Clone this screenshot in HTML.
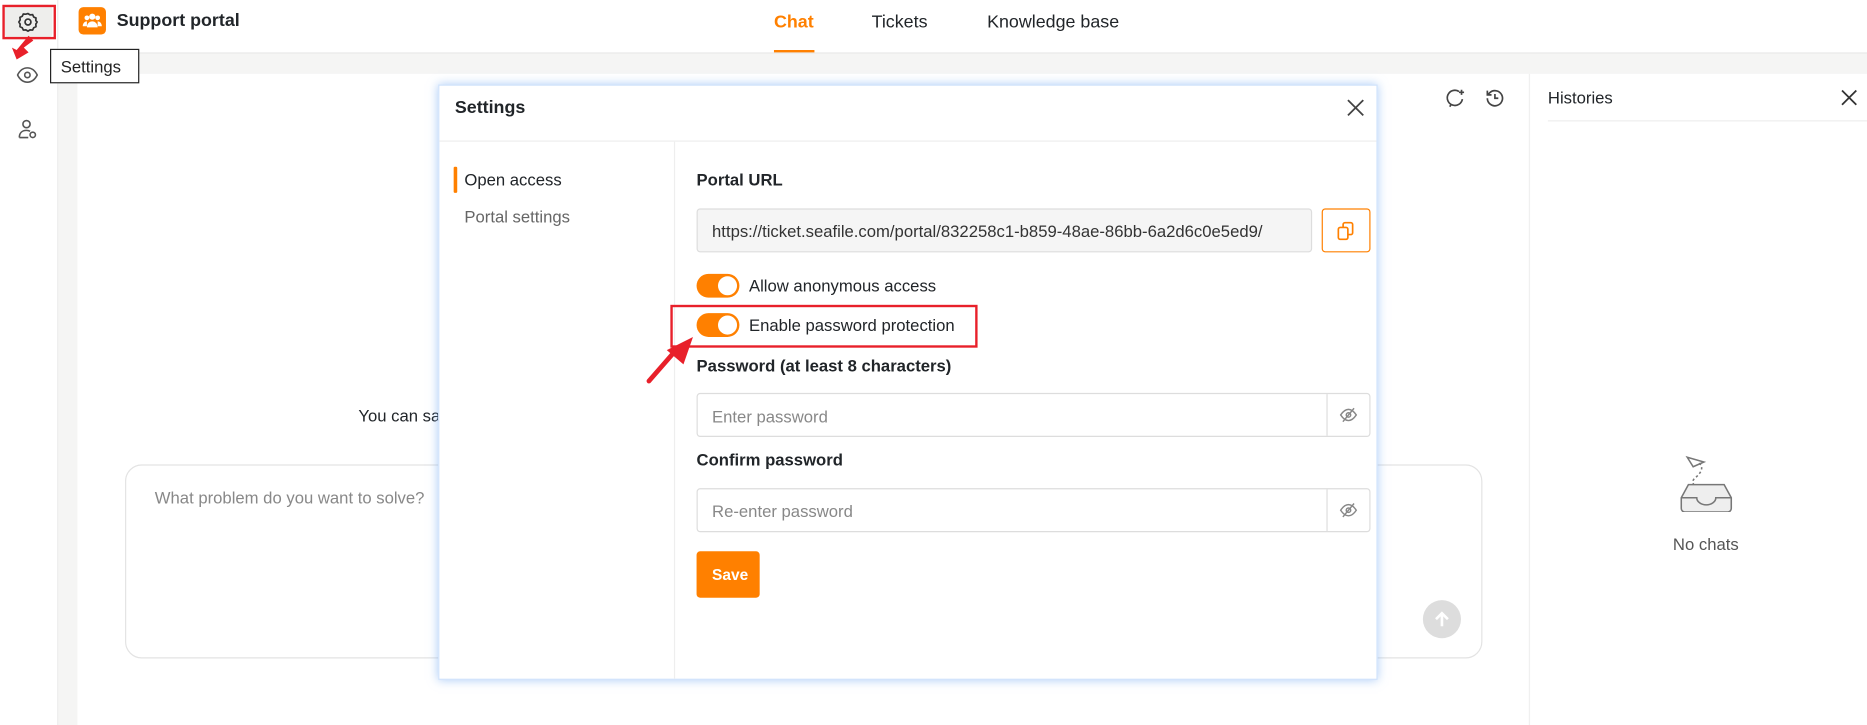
<!DOCTYPE html>
<html><head><meta charset="utf-8"><style>
*{box-sizing:border-box;margin:0;padding:0}
html,body{width:1867px;height:725px;overflow:hidden;background:#fff;font-family:"Liberation Sans",sans-serif;color:#212529}
#w{position:absolute;left:0;top:0;width:1568px;height:609px;transform:scale(1.1907);transform-origin:0 0;background:#f5f5f4}
.a{position:absolute}
.t{position:absolute;white-space:nowrap;font-size:14px}
</style></head><body><div id="w">
<div class="a" style="left:0;top:0;width:1568px;height:45px;background:#fff;border-bottom:1px solid #e8e8e8"></div>
<div class="a" style="left:0;top:0;width:49px;height:609px;background:#fff;border-right:1px solid #ececec"></div>
<div class="a" style="left:4px;top:4px;width:40px;height:28px;background:#eeeeec;border-radius:4px"></div>
<svg class="a" style="left:15px;top:10px" width="17" height="17" viewBox="0 0 24 24" fill="none" stroke="#333" stroke-width="2"><path d="M12 2l2.5 1.5 3-.2 1.3 2.7 2.7 1.3-.2 3L22.8 12l-1.5 2.5.2 3-2.7 1.3-1.3 2.7-3-.2L12 22.8l-2.5-1.5-3 .2-1.3-2.7-2.7-1.3.2-3L1.2 12l1.5-2.5-.2-3 2.7-1.3L6.5 2.5l3 .2z"/><circle cx="12" cy="12" r="3.5"/></svg>
<div class="a" style="left:2px;top:4px;width:45px;height:29px;border:2px solid #e8202a"></div>
<svg class="a" style="left:6px;top:28px" width="26" height="26" viewBox="0 0 26 26"><path d="M18 2 L22 6 L14 12 L18 16 L8 22 L4 12 L8 14 Z" fill="#e8202a"/></svg>
<svg class="a" style="left:14px;top:55px" width="18" height="16" viewBox="0 0 24 20" fill="none" stroke="#555" stroke-width="1.8"><path d="M1 10C4 4 8 2 12 2s8 2 11 8c-3 6-7 8-11 8S4 16 1 10z"/><circle cx="12" cy="10" r="3"/></svg>
<svg class="a" style="left:14px;top:99px" width="18" height="18" viewBox="0 0 24 24" fill="none" stroke="#555" stroke-width="1.8"><circle cx="11" cy="7" r="4"/><path d="M3 22c0-5 3-8 8-8 2 0 3 .4 4 1M3 22h10"/><circle cx="18" cy="19" r="3"/></svg>
<div class="a" style="left:66px;top:6px;width:23px;height:23px;background:#ff8000;border-radius:4px"></div>
<svg class="a" style="left:69px;top:10px" width="17" height="14" viewBox="0 0 17 14" fill="#fff"><circle cx="8.5" cy="4" r="2.6"/><circle cx="4" cy="5" r="2"/><circle cx="13" cy="5" r="2"/><path d="M4 13c0-3 2-5 4.5-5s4.5 2 4.5 5zM0.5 12c0-2 1.3-4 3.5-4l0 4zM16.5 12c0-2-1.3-4-3.5-4v4z"/></svg>
<div class="t" style="left:98px;top:9px;font-size:15px;font-weight:bold;color:#212529">Support portal</div>
<div class="t" style="left:650px;top:10px;font-size:15px;font-weight:bold;color:#ff8000">Chat</div>
<div class="a" style="left:650px;top:42px;width:34px;height:2px;background:#ff8000"></div>
<div class="t" style="left:732px;top:10px;font-size:15px;color:#212529">Tickets</div>
<div class="t" style="left:829px;top:10px;font-size:15px;color:#212529">Knowledge base</div>
<div class="a" style="left:65px;top:62px;width:1219px;height:547px;background:#fff;border-radius:8px 0 0 0"></div>
<div class="a" style="left:1284px;top:62px;width:284px;height:547px;background:#fff;border-left:1px solid #f0f0f0"></div>
<svg class="a" style="left:1214px;top:74px" width="17" height="17" viewBox="0 0 24 24" fill="none" stroke="#444" stroke-width="2"><path d="M16 4a9 9 0 1 0 4 9"/><path d="M7 19l-2 3"/><path d="M19 2v6M16 5h6"/></svg>
<svg class="a" style="left:1247px;top:74px" width="17" height="17" viewBox="0 0 24 24" fill="none" stroke="#444" stroke-width="2"><path d="M3 12a9 9 0 1 0 3-6.7L3 8"/><path d="M3 3v5h5"/><path d="M12 7v5h4"/></svg>
<div class="t" style="left:1300px;top:74px;font-size:14px;color:#212529">Histories</div>
<svg class="a" style="left:1546px;top:75px" width="14" height="14" viewBox="0 0 14 14" stroke="#333" stroke-width="1.5"><path d="M1 1l12 12M13 1L1 13"/></svg>
<div class="a" style="left:1300px;top:101px;width:268px;height:1px;background:#eee"></div>
<svg class="a" style="left:1410px;top:382px" width="46" height="48" viewBox="0 0 46 48" fill="none" stroke="#777" stroke-width="1.3"><path d="M7 2l14 4-9 4z"/><path d="M17 7c4 3 2 8-3 12s-1 8 5 10" stroke-dasharray="2 2"/><path d="M2 36l6-11h30l6 11v9a3 3 0 0 1-3 3H5a3 3 0 0 1-3-3z" fill="#eee"/><path d="M2 36h13a8 6 0 0 0 16 0h13"/></svg>
<div class="t" style="left:1405px;top:449px;font-size:14px;color:#555">No chats</div>
<div class="t" style="left:301px;top:341px;font-size:14px;color:#212529">You can sa</div>
<div class="a" style="left:105px;top:390px;width:1140px;height:163px;border:1px solid #e3e3e3;border-radius:14px;background:#fff"></div>
<div class="t" style="left:130px;top:410px;font-size:14px;color:#888">What problem do you want to solve?</div>
<div class="a" style="left:1195px;top:504px;width:32px;height:32px;border-radius:50%;background:#ddd"></div>
<svg class="a" style="left:1203px;top:512px" width="16" height="16" viewBox="0 0 16 16" stroke="#fff" stroke-width="2.2" fill="none"><path d="M8 14V3M3 8l5-5 5 5"/></svg>
<div class="a" style="left:368px;top:71px;width:789px;height:500px;background:#fff;border:1px solid #cfe2fb;box-shadow:0 0 8px rgba(100,160,240,.55)"></div>
<div class="t" style="left:382px;top:82px;font-size:15px;font-weight:bold;color:#212529">Settings</div>
<svg class="a" style="left:1131px;top:83px" width="15" height="15" viewBox="0 0 14 14" stroke="#444" stroke-width="1.4"><path d="M1 1l12 12M13 1L1 13"/></svg>
<div class="a" style="left:369px;top:118px;width:787px;height:1px;background:#eee"></div>
<div class="a" style="left:566px;top:119px;width:1px;height:451px;background:#eee"></div>
<div class="a" style="left:381px;top:140px;width:3px;height:22px;background:#ff8000;border-radius:1px"></div>
<div class="t" style="left:390px;top:143px;font-size:14px;color:#212529">Open access</div>
<div class="t" style="left:390px;top:174px;font-size:14px;color:#666">Portal settings</div>
<div class="t" style="left:585px;top:143px;font-size:14px;font-weight:bold;color:#212529">Portal URL</div>
<div class="a" style="left:585px;top:175px;width:517px;height:37px;background:#f5f5f5;border:1px solid #ddd;border-radius:3px"></div>
<div class="t" style="left:598px;top:186px;font-size:14px;color:#333">https://ticket.seafile.com/portal/832258c1-b859-48ae-86bb-6a2d6c0e5ed9/</div>
<div class="a" style="left:1110px;top:175px;width:41px;height:37px;border:1px solid #ff8000;border-radius:3px"></div>
<svg class="a" style="left:1122px;top:186px" width="16" height="16" viewBox="0 0 16 16" fill="none" stroke="#ff8000" stroke-width="1.4"><rect x="2" y="5" width="8" height="10" rx="1.5"/><path d="M6 5V2.5A1.5 1.5 0 0 1 7.5 1h5A1.5 1.5 0 0 1 14 2.5v7a1.5 1.5 0 0 1-1.5 1.5H10"/></svg>
<div class="a" style="left:585px;top:230px;width:36px;height:20px;border-radius:10px;background:#ff8000"></div>
<div class="a" style="left:603px;top:232px;width:16px;height:16px;border-radius:50%;background:#fff"></div>
<div class="t" style="left:629px;top:232px;font-size:14px;color:#212529">Allow anonymous access</div>
<div class="a" style="left:585px;top:263px;width:36px;height:20px;border-radius:10px;background:#ff8000"></div>
<div class="a" style="left:603px;top:265px;width:16px;height:16px;border-radius:50%;background:#fff"></div>
<div class="t" style="left:629px;top:265px;font-size:14px;color:#212529">Enable password protection</div>
<div class="a" style="left:563px;top:256px;width:258px;height:36px;border:2px solid #e8202a"></div>
<svg class="a" style="left:540px;top:280px" width="45" height="45" viewBox="0 0 45 45"><path d="M5 40 L26 16" stroke="#e8202a" stroke-width="4" stroke-linecap="round"/><path d="M42 3 L34 26 L20 14 Z" fill="#e8202a"/></svg>
<div class="t" style="left:585px;top:299px;font-size:14px;font-weight:bold;color:#212529">Password (at least 8 characters)</div>
<div class="a" style="left:585px;top:330px;width:566px;height:37px;border:1px solid #ddd;border-radius:3px"></div>
<div class="a" style="left:1114px;top:331px;width:1px;height:35px;background:#ddd"></div>
<div class="t" style="left:598px;top:342px;font-size:14px;color:#888">Enter password</div>
<div class="t" style="left:585px;top:378px;font-size:14px;font-weight:bold;color:#212529">Confirm password</div>
<div class="a" style="left:585px;top:410px;width:566px;height:37px;border:1px solid #ddd;border-radius:3px"></div>
<div class="a" style="left:1114px;top:411px;width:1px;height:35px;background:#ddd"></div>
<div class="t" style="left:598px;top:421px;font-size:14px;color:#888">Re-enter password</div>
<svg class="a" style="left:1125px;top:341px" width="15" height="15" viewBox="0 0 16 16" fill="none" stroke="#888" stroke-width="1.3"><path d="M1 8c2-3 4-5 7-5s5 2 7 5c-2 3-4 5-7 5S3 11 1 8z"/><circle cx="8" cy="8" r="2"/><path d="M3 14L13 2"/></svg>
<svg class="a" style="left:1125px;top:421px" width="15" height="15" viewBox="0 0 16 16" fill="none" stroke="#888" stroke-width="1.3"><path d="M1 8c2-3 4-5 7-5s5 2 7 5c-2 3-4 5-7 5S3 11 1 8z"/><circle cx="8" cy="8" r="2"/><path d="M3 14L13 2"/></svg>
<div class="a" style="left:585px;top:463px;width:53px;height:39px;background:#ff8000;border-radius:3px"></div>
<div class="t" style="left:598px;top:475px;font-size:13px;font-weight:bold;color:#fff">Save</div>
<div class="a" style="left:42px;top:41px;width:75px;height:29px;background:#fff;border:1.5px solid #222"></div>
<div class="t" style="left:51px;top:48px;font-size:14px;color:#222">Settings</div>
</div></body></html>
